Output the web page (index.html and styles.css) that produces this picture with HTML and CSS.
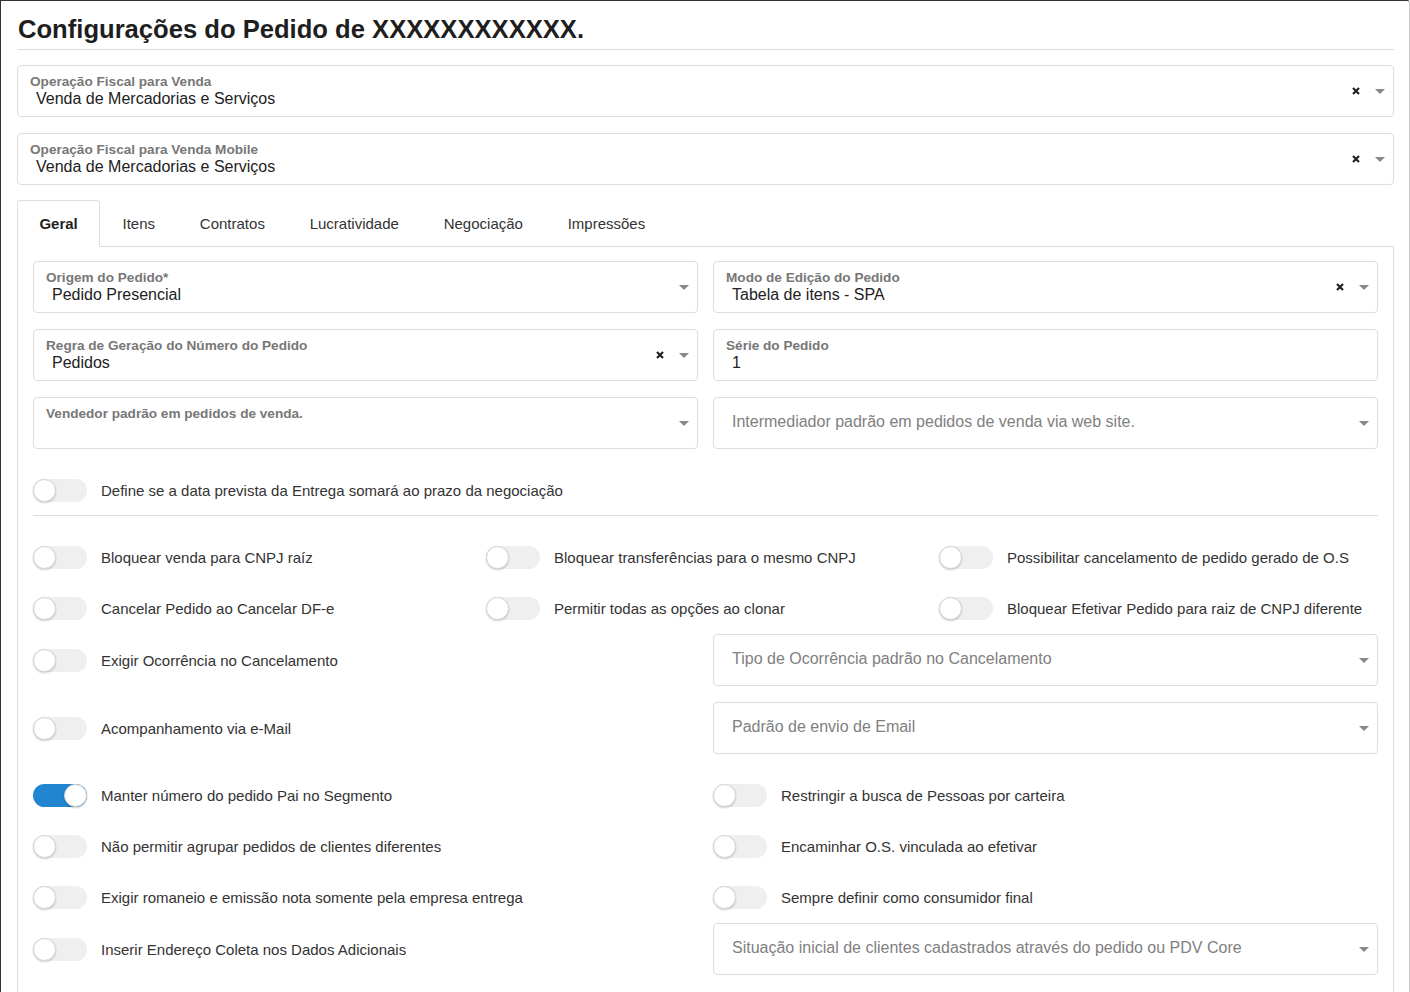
FILE: index.html
```html
<!DOCTYPE html>
<html lang="pt-BR">
<head>
    <meta charset="UTF-8">
    <title>Configurações do Pedido</title>
    <link rel="stylesheet" href="styles.css">
</head>
<body>
<div class="modal">
    <h1 class="title">Configurações do Pedido de XXXXXXXXXXXX.</h1>

    <div class="field">
        <div class="field-text">
            <span class="field-label">Operação Fiscal para Venda</span>
            <span class="field-value">Venda de Mercadorias e Serviços</span>
        </div>
        <span class="clear"><svg width="8" height="8" viewBox="0 0 8 8"><path d="M1 1L7 7M7 1L1 7"/></svg></span>
        <span class="caret"></span>
    </div>

    <div class="field last-top">
        <div class="field-text">
            <span class="field-label">Operação Fiscal para Venda Mobile</span>
            <span class="field-value">Venda de Mercadorias e Serviços</span>
        </div>
        <span class="clear"><svg width="8" height="8" viewBox="0 0 8 8"><path d="M1 1L7 7M7 1L1 7"/></svg></span>
        <span class="caret"></span>
    </div>

    <ul class="tabs">
        <li class="tab active">Geral</li>
        <li class="tab">Itens</li>
        <li class="tab">Contratos</li>
        <li class="tab">Lucratividade</li>
        <li class="tab">Negociação</li>
        <li class="tab">Impressões</li>
    </ul>

    <div class="tab-panel">
        <div class="fields-2">
            <div class="field">
                <div class="field-text">
                    <span class="field-label">Origem do Pedido*</span>
                    <span class="field-value">Pedido Presencial</span>
                </div>
                <span class="caret"></span>
            </div>
            <div class="field">
                <div class="field-text">
                    <span class="field-label">Modo de Edição do Pedido</span>
                    <span class="field-value">Tabela de itens - SPA</span>
                </div>
                <span class="clear"><svg width="8" height="8" viewBox="0 0 8 8"><path d="M1 1L7 7M7 1L1 7"/></svg></span>
                <span class="caret"></span>
            </div>
            <div class="field">
                <div class="field-text">
                    <span class="field-label">Regra de Geração do Número do Pedido</span>
                    <span class="field-value">Pedidos</span>
                </div>
                <span class="clear"><svg width="8" height="8" viewBox="0 0 8 8"><path d="M1 1L7 7M7 1L1 7"/></svg></span>
                <span class="caret"></span>
            </div>
            <div class="field">
                <div class="field-text">
                    <span class="field-label">Série do Pedido</span>
                    <span class="field-value">1</span>
                </div>
            </div>
            <div class="field">
                <div class="field-text">
                    <span class="field-label">Vendedor padrão em pedidos de venda.</span>
                    <span class="field-value"></span>
                </div>
                <span class="caret"></span>
            </div>
            <div class="field">
                <div class="field-text">
                    <span class="placeholder">Intermediador padrão em pedidos de venda via web site.</span>
                </div>
                <span class="caret"></span>
            </div>
        </div>

        <div class="switch">
            <span class="toggle"></span>
            <span>Define se a data prevista da Entrega somará ao prazo da negociação</span>
        </div>

        <hr class="divider">

        <div class="switches-3">
            <div class="switch"><span class="toggle"></span><span>Bloquear venda para CNPJ raíz</span></div>
            <div class="switch"><span class="toggle"></span><span>Bloquear transferências para o mesmo CNPJ</span></div>
            <div class="switch"><span class="toggle"></span><span>Possibilitar cancelamento de pedido gerado de O.S</span></div>
            <div class="switch"><span class="toggle"></span><span>Cancelar Pedido ao Cancelar DF-e</span></div>
            <div class="switch"><span class="toggle"></span><span>Permitir todas as opções ao clonar</span></div>
            <div class="switch"><span class="toggle"></span><span>Bloquear Efetivar Pedido para raiz de CNPJ diferente</span></div>
        </div>

        <div class="split spaced">
            <div class="switch"><span class="toggle"></span><span>Exigir Ocorrência no Cancelamento</span></div>
            <div class="field">
                <div class="field-text">
                    <span class="placeholder">Tipo de Ocorrência padrão no Cancelamento</span>
                </div>
                <span class="caret"></span>
            </div>
        </div>
        <div class="split spaced">
            <div class="switch"><span class="toggle"></span><span>Acompanhamento via e-Mail</span></div>
            <div class="field">
                <div class="field-text">
                    <span class="placeholder">Padrão de envio de Email</span>
                </div>
                <span class="caret"></span>
            </div>
        </div>
        <div class="split">
            <div class="switch"><span class="toggle on"></span><span>Manter número do pedido Pai no Segmento</span></div>
            <div class="switch"><span class="toggle"></span><span>Restringir a busca de Pessoas por carteira</span></div>
        </div>
        <div class="split">
            <div class="switch"><span class="toggle"></span><span>Não permitir agrupar pedidos de clientes diferentes</span></div>
            <div class="switch"><span class="toggle"></span><span>Encaminhar O.S. vinculada ao efetivar</span></div>
        </div>
        <div class="split">
            <div class="switch"><span class="toggle"></span><span>Exigir romaneio e emissão nota somente pela empresa entrega</span></div>
            <div class="switch"><span class="toggle"></span><span>Sempre definir como consumidor final</span></div>
        </div>
        <div class="split">
            <div class="switch"><span class="toggle"></span><span>Inserir Endereço Coleta nos Dados Adicionais</span></div>
            <div class="field">
                <div class="field-text">
                    <span class="placeholder">Situação inicial de clientes cadastrados através do pedido ou PDV Core</span>
                </div>
                <span class="caret"></span>
            </div>
        </div>
    </div>
</div>
</body>
</html>
```

FILE: styles.css
```css
body {
    margin: 0;
    font-family: "Liberation Sans", Arial, sans-serif;
    color: #333;
    background-color: #fff;
    overflow: hidden;
}
.modal {
    width: 1410px;
    height: 992px;
    box-sizing: border-box;
    border-top: 1px solid #333;
    border-left: 1px solid #333;
    border-right: 1px solid #c8c8c8;
    border-top-right-radius: 3px;
    padding: 13px 15px 0 16px;
    overflow: hidden;
}
.title {
    margin: 0 0 15px 1px;
    padding-bottom: 5px;
    font-size: 25.6px;
    line-height: 30px;
    font-weight: bold;
    color: #1e1e1e;
    border-bottom: 1px solid #ddd;
}
.field {
    display: flex;
    align-items: center;
    height: 52px;
    box-sizing: border-box;
    border: 1px solid #ddd;
    border-radius: 4px;
    padding: 0 8px 0 12px;
    margin-bottom: 16px;
    background-color: #fff;
}
.field.last-top {
    margin-bottom: 15px;
}
.field-text {
    flex: 1;
    display: flex;
    flex-direction: column;
    align-self: stretch;
    justify-content: flex-start;
    padding-top: 7px;
    min-width: 0;
}
.field-label {
    font-size: 13.6px;
    line-height: 17px;
    font-weight: bold;
    color: #777;
}
.field-value {
    font-size: 16px;
    line-height: 18px;
    color: #222;
    padding-left: 6px;
    min-height: 18px;
}
.placeholder {
    font-size: 16px;
    line-height: 18px;
    color: #808080;
    padding-left: 6px;
    margin-top: 8px;
}
.clear {
    display: flex;
    width: 8px;
    height: 8px;
    margin-right: 15px;
}
.clear path {
    stroke: #222;
    stroke-width: 2.2;
}
.caret {
    width: 0;
    height: 0;
    border-left: 5px solid transparent;
    border-right: 5px solid transparent;
    border-top: 5px solid #888;
}
.tabs {
    display: flex;
    list-style: none;
    margin: 0;
    padding: 0;
    border-bottom: 1px solid #ddd;
}
.tab {
    height: 45px;
    line-height: 45px;
    padding: 0 21.4px;
    font-size: 15px;
    color: #333;
    border: 1px solid transparent;
    border-bottom: none;
    margin-bottom: -1px;
}
.tab.active {
    font-weight: bold;
    color: #1e1e1e;
    background-color: #fff;
    border-color: #ddd;
    border-radius: 4px 4px 0 0;
    height: 46px;
}
.tab-panel {
    border-left: 1px solid #ddd;
    border-right: 1px solid #ddd;
    padding: 14px 15px 40px;
}
.fields-2 {
    display: grid;
    grid-template-columns: 1fr 1fr;
    column-gap: 15px;
}
.switch {
    display: flex;
    align-items: center;
    gap: 14px;
    height: 51px;
    font-size: 15px;
    color: #333;
    white-space: nowrap;
}
.toggle {
    position: relative;
    flex: none;
    width: 54px;
    height: 23px;
    border-radius: 12px;
    background-color: #efefef;
}
.toggle::after {
    content: "";
    position: absolute;
    left: 0;
    top: 0;
    width: 21px;
    height: 21px;
    border-radius: 50%;
    background-color: #fff;
    border: 1px solid #d4d4d4;
    box-shadow: 0 1px 2px rgba(0, 0, 0, 0.18);
}
.toggle.on {
    background-color: #2185d0;
}
.toggle.on::after {
    left: auto;
    right: 0;
}
.divider {
    border: none;
    border-top: 1px solid #ddd;
    margin: -1px 0 16px;
}
.switches-3 {
    display: grid;
    grid-template-columns: 1fr 1fr 1fr;
    column-gap: 14px;
}
.split {
    display: grid;
    grid-template-columns: 1fr 1fr;
    column-gap: 15px;
    align-items: center;
}
.split .field {
    margin-bottom: 0;
}
.split.spaced {
    margin-bottom: 16px;
}
```
